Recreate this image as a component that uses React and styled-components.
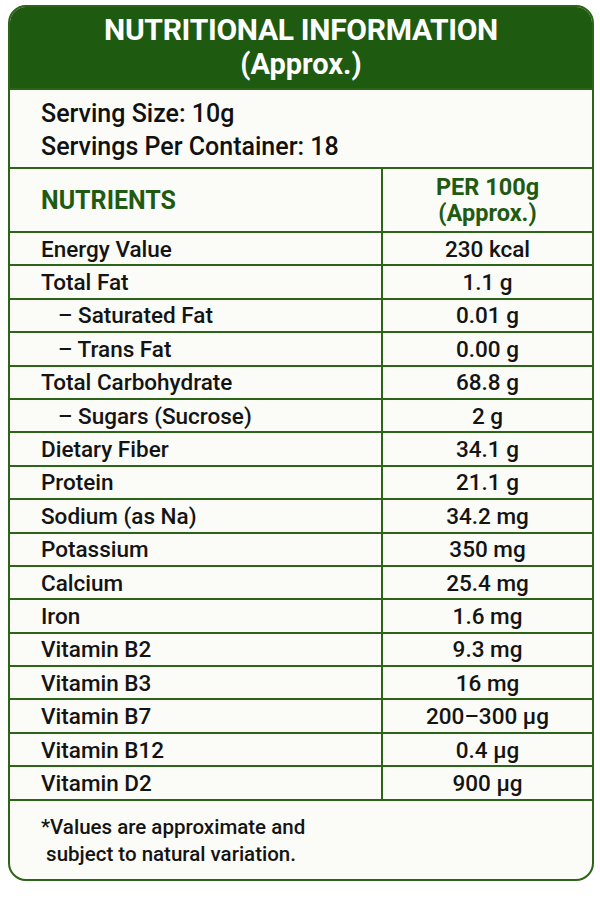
import React from 'react';
import styled, { createGlobalStyle } from 'styled-components';

const GlobalStyle = createGlobalStyle`
  body {
    margin: 0;
    background: #ffffff;
    font-family: 'Roboto', 'Liberation Sans', sans-serif;
  }
`;

const Card = styled.div`
  box-sizing: border-box;
  width: 586px;
  height: 876px;
  margin: 5px 0 0 8px;
  border: 2.5px solid #2c6418;
  border-radius: 18px;
  overflow: hidden;
  background: #fbfbf8;
  display: flex;
  flex-direction: column;
`;

const Header = styled.div`
  background: #1e5a10;
  color: #ffffff;
  height: 79px;
  display: flex;
  flex-direction: column;
  align-items: center;
  justify-content: center;
  font-weight: 700;
  line-height: 35px;
  border-bottom: 2px solid #2c6418;
  padding-bottom: 2px;
`;

const Title = styled.div`
  font-size: 30px;
  letter-spacing: -0.3px;
`;

const Sub = styled.div`
  font-size: 29px;
`;

const Serving = styled.div`
  height: 77px;
  box-sizing: border-box;
  padding: 7px 0 0 31px;
  font-size: 25px;
  font-weight: 500;
  line-height: 33px;
  color: #111;
`;

const Row = styled.div`
  display: grid;
  grid-template-columns: 373px 1fr;
  height: ${({ $h }) => $h}px;
  box-sizing: border-box;
  border-top: 2px solid #2c6418;
`;

const NameCell = styled.div`
  display: flex;
  align-items: center;
  padding-left: ${({ $sub }) => ($sub ? 48 : 31)}px;
  font-size: ${({ $head }) => ($head ? 25 : 22.5)}px;
  font-weight: ${({ $head }) => ($head ? 700 : 500)};
  color: ${({ $head }) => ($head ? '#1f5a12' : '#141414')};
  border-right: 2px solid #2c6418;
  white-space: pre;
`;

const ValueCell = styled.div`
  display: flex;
  flex-direction: column;
  align-items: center;
  justify-content: center;
  font-size: ${({ $head }) => ($head ? 23.5 : 22.5)}px;
  font-weight: ${({ $head }) => ($head ? 700 : 500)};
  color: ${({ $head }) => ($head ? '#1f5a12' : '#141414')};
  line-height: ${({ $head }) => ($head ? '26px' : 'normal')};
`;

const Footer = styled.div`
  flex: 1;
  border-top: 2px solid #2c6418;
  padding: 13px 0 0 31px;
  font-size: 20.5px;
  font-weight: 500;
  line-height: 27px;
  color: #141414;
`;

const rows = [
  ['Energy Value', '230 kcal'],
  ['Total Fat', '1.1 g'],
  ['– Saturated Fat', '0.01 g', true],
  ['– Trans Fat', '0.00 g', true],
  ['Total Carbohydrate', '68.8 g'],
  ['– Sugars (Sucrose)', '2 g', true],
  ['Dietary Fiber', '34.1 g'],
  ['Protein', '21.1 g'],
  ['Sodium (as Na)', '34.2 mg'],
  ['Potassium', '350 mg'],
  ['Calcium', '25.4 mg'],
  ['Iron', '1.6 mg'],
  ['Vitamin B2', '9.3 mg'],
  ['Vitamin B3', '16 mg'],
  ['Vitamin B7', '200–300 µg'],
  ['Vitamin B12', '0.4 µg'],
  ['Vitamin D2', '900 µg'],
];

export default function App() {
  return (
    <>
      <GlobalStyle />
      <Card>
        <Header>
          <Title>NUTRITIONAL INFORMATION</Title>
          <Sub>(Approx.)</Sub>
        </Header>
        <Serving>
          <div>Serving Size: 10g</div>
          <div>Servings Per Container: 18</div>
        </Serving>
        <Row $h={64}>
          <NameCell $head>NUTRIENTS</NameCell>
          <ValueCell $head>
            <span>PER 100g</span>
            <span>(Approx.)</span>
          </ValueCell>
        </Row>
        {rows.map(([name, value, sub]) => (
          <Row key={name} $h={33.4}>
            <NameCell $sub={sub}>{name}</NameCell>
            <ValueCell>{value}</ValueCell>
          </Row>
        ))}
        <Footer>
          <div>*Values are approximate and</div>
          <div>&nbsp;subject to natural variation.</div>
        </Footer>
      </Card>
    </>
  );
}
